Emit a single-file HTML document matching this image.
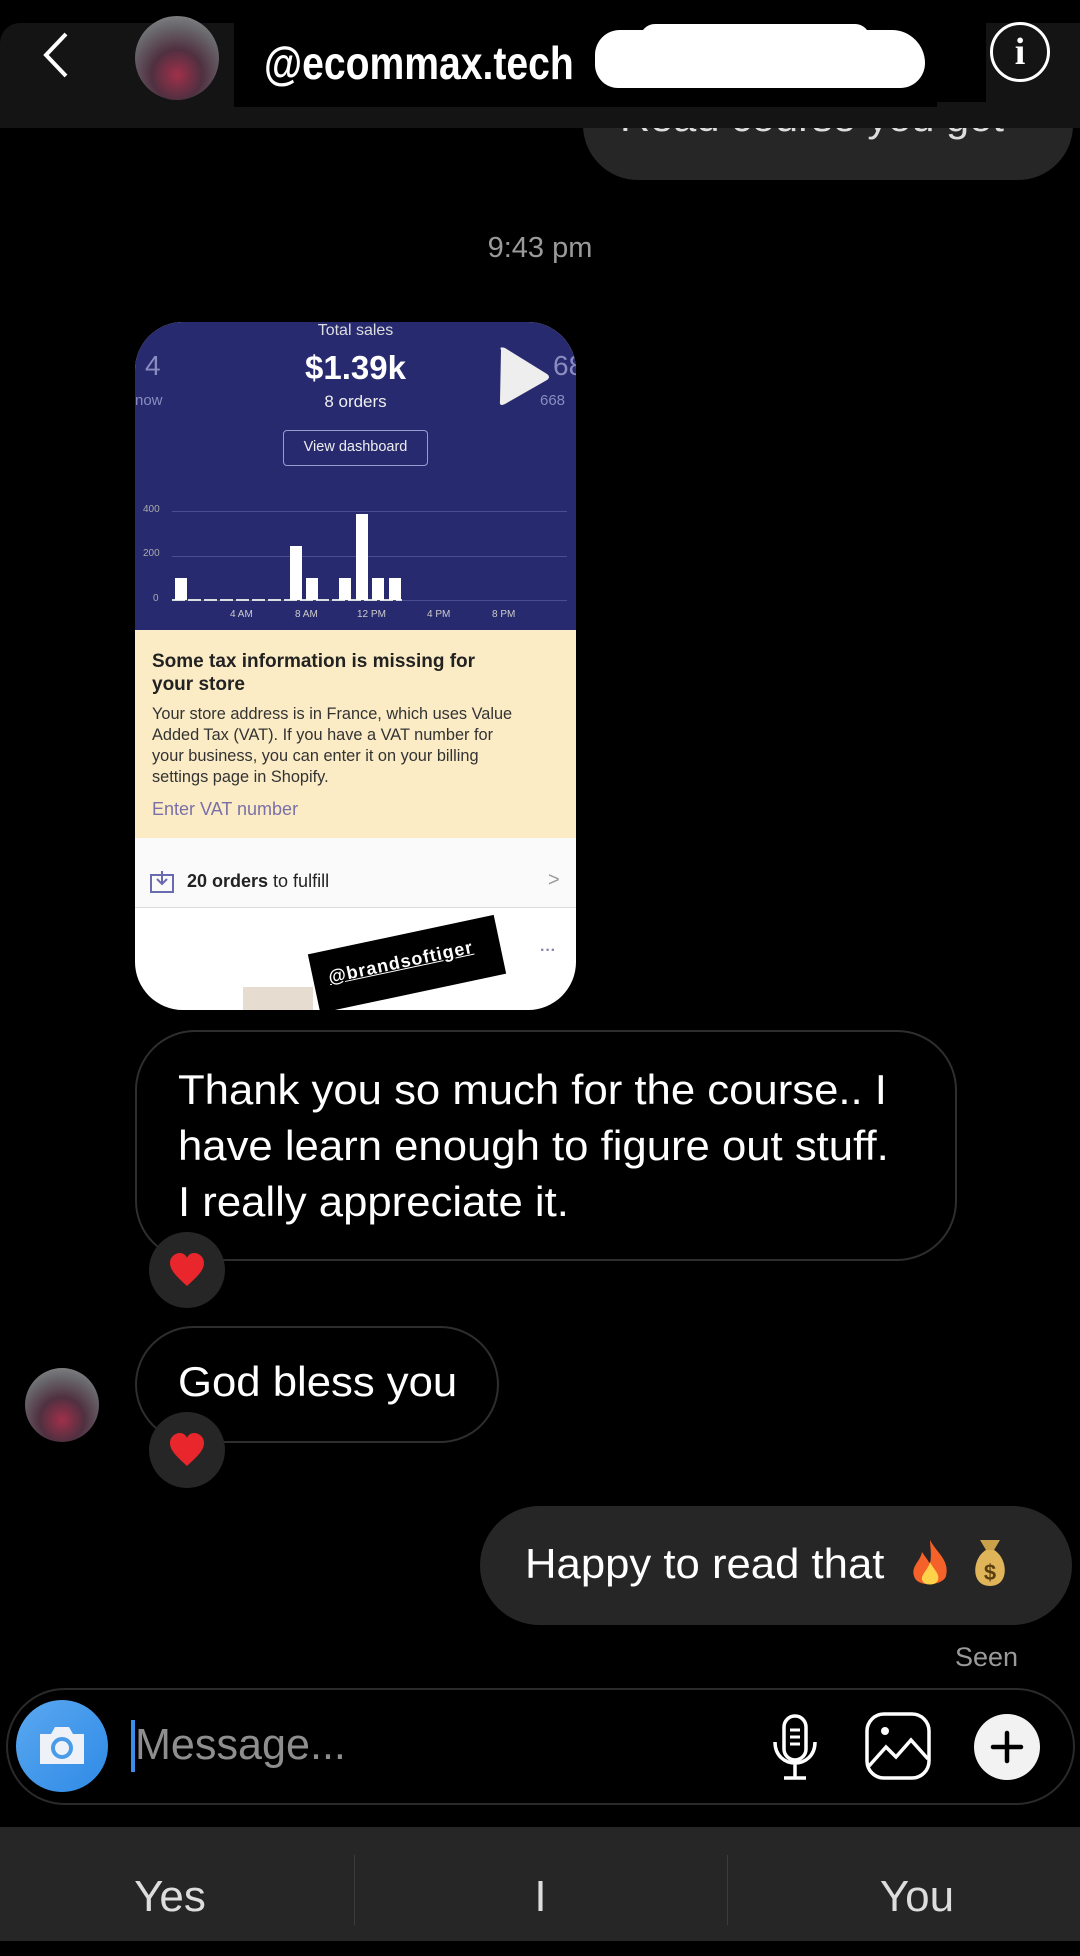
<!DOCTYPE html>
<html><head><meta charset="utf-8"><style>
*{margin:0;padding:0;box-sizing:border-box}
body{width:1080px;height:1956px;background:#000;position:relative;overflow:hidden;font-family:"Liberation Sans",sans-serif;color:#fff}
.a{position:absolute}
.nx{display:inline-block;transform-origin:left center;transform:scaleX(1.04);white-space:nowrap}
.bub{position:absolute;border:2px solid #2e2e2e;border-radius:60px;background:#000}
.heart{position:absolute;width:76px;height:76px;border-radius:50%;background:#262626;display:flex;align-items:center;justify-content:center}
.card{position:absolute;left:135px;top:322px;width:441px;height:688px;border-radius:48px;overflow:hidden;background:#fff}
.c{position:absolute;text-align:center;width:100%;left:0}
.bar{position:absolute;background:#fff;width:12px;bottom:0}
</style></head><body>
<div class="a" style="left:583px;top:60px;width:490px;height:120px;border-radius:55px;background:#262626"></div>
<div class="a" style="left:620px;top:96px;font-size:40px;color:#ddd"><span class="nx">Read course you got</span></div>
<div class="a" style="left:0;top:23px;width:1080px;height:105px;background:#141414;border-radius:20px 0 0 0"></div>
<svg class="a" style="left:38px;top:30px" width="36" height="50"><path d="M28 4 L8 25 L28 46" stroke="#fff" stroke-width="4" fill="none"/></svg>
<div class="a" style="left:135px;top:16px;width:84px;height:84px;border-radius:50%;background:radial-gradient(circle at 50% 70%,#a0304a 0,#503040 35%,#6b6b70 70%,#9a9a9a 100%)"></div>
<div class="a" style="left:234px;top:23px;width:703px;height:84px;background:#000"></div>
<div class="a" style="left:900px;top:23px;width:86px;height:79px;background:#000"></div>
<div class="a" style="left:264px;top:36px;font-size:46px;font-weight:bold;text-decoration:underline;text-decoration-thickness:3px"><span class="nx" style="transform:scaleX(.85)">@ecommax.tech</span></div>
<div class="a" style="left:595px;top:30px;width:330px;height:58px;background:#fff;border-radius:30px 40px 30px 28px"></div>
<div class="a" style="left:640px;top:24px;width:230px;height:30px;background:#fff;border-radius:15px"></div>
<div class="a" style="left:990px;top:22px;width:60px;height:60px;border:3px solid #fff;border-radius:50%;text-align:center;font:bold 38px 'Liberation Serif',serif;line-height:54px">i</div>
<div class="a" style="left:0;top:232px;width:1080px;text-align:center;font-size:29px;color:#9a9a9a">9:43 pm</div>
<div class="card">
 <div class="a" style="left:0;top:0;width:441px;height:308px;background:#272a6e"></div>
 <div class="c" style="top:0;font-size:16px;color:#ddd">Total sales</div>
 <div class="c" style="top:27px;font-size:33px;font-weight:bold">$1.39k</div>
 <div class="c" style="top:70px;font-size:17px;color:#eee">8 orders</div>
 <div class="a" style="left:10px;top:28px;font-size:28px;color:#8a8cc0">4</div>
 <div class="a" style="left:0;top:70px;font-size:15px;color:#8a8cc0">now</div>
 <div class="a" style="left:405px;top:70px;font-size:15px;color:#8a8cc0">668</div>
 <div class="a" style="left:418px;top:28px;font-size:28px;color:#8a8cc0">68</div>
 <svg class="a" style="left:362px;top:24px" width="55" height="62"><path d="M4 4 Q2 0 8 2 L50 28 Q54 31 50 34 L8 58 Q2 61 3 55 Z" fill="#eee"/></svg>
 <div class="a" style="left:148px;top:108px;width:145px;height:36px;border:1.5px solid #9a9cd0;border-radius:4px;font-size:14.5px;text-align:center;line-height:33px;color:#eee">View dashboard</div>
 <div class="a" style="left:8px;top:182px;font-size:10px;color:#aaa">400</div>
 <div class="a" style="left:8px;top:226px;font-size:10px;color:#aaa">200</div>
 <div class="a" style="left:18px;top:271px;font-size:10px;color:#aaa">0</div>
 <div class="a" style="left:37px;top:189px;width:395px;height:1px;background:#4a4e8e"></div>
 <div class="a" style="left:37px;top:234px;width:395px;height:1px;background:#4a4e8e"></div>
 <div class="a" style="left:37px;top:278px;width:395px;height:1px;background:#4a4e8e"></div>
 <div class="a" style="left:37px;top:277px;width:230px;height:2px;background:repeating-linear-gradient(90deg,#ddd 0 13px,transparent 13px 16px)"></div>
 <div class="a" style="left:37px;top:158px;width:230px;height:120px">
  <div class="bar" style="left:3px;height:22px"></div>
  <div class="bar" style="left:118px;height:54px"></div>
  <div class="bar" style="left:134px;height:22px"></div>
  <div class="bar" style="left:167px;height:22px"></div>
  <div class="bar" style="left:184px;height:86px"></div>
  <div class="bar" style="left:200px;height:22px"></div>
  <div class="bar" style="left:217px;height:22px"></div>
 </div>
 <div class="a" style="left:95px;top:287px;font-size:10px;color:#ccc">4 AM</div>
 <div class="a" style="left:160px;top:287px;font-size:10px;color:#ccc">8 AM</div>
 <div class="a" style="left:222px;top:287px;font-size:10px;color:#ccc">12 PM</div>
 <div class="a" style="left:292px;top:287px;font-size:10px;color:#ccc">4 PM</div>
 <div class="a" style="left:357px;top:287px;font-size:10px;color:#ccc">8 PM</div>
 <div class="a" style="left:0;top:308px;width:441px;height:208px;background:#fbecc6"></div>
 <div class="a" style="left:17px;top:328px;font-size:19px;font-weight:bold;color:#222;line-height:23px">Some tax information is missing for<br>your store</div>
 <div class="a" style="left:17px;top:381px;font-size:17px;color:#333;line-height:21px;white-space:nowrap"><span style="display:inline-block;transform:scaleX(.96);transform-origin:left">Your store address is in France, which uses Value<br>Added Tax (VAT). If you have a VAT number for<br>your business, you can enter it on your billing<br>settings page in Shopify.</span></div>
 <div class="a" style="left:17px;top:477px;font-size:18px;color:#7a70a8">Enter VAT number</div>
 <div class="a" style="left:0;top:516px;width:441px;height:70px;background:#fafafa;border-bottom:1px solid #ddd"></div>
 <svg class="a" style="left:14px;top:548px" width="26" height="24"><rect x="2" y="5" width="22" height="17" fill="none" stroke="#6a6ab0" stroke-width="2"/><path d="M13 1 V13 M8 9 L13 14 L18 9" stroke="#6a6ab0" stroke-width="2" fill="none"/></svg>
 <div class="a" style="left:52px;top:549px;font-size:18px;color:#222"><b>20 orders</b> to fulfill</div>
 <div class="a" style="left:413px;top:547px;font-size:20px;color:#999">&gt;</div>
 <div class="a" style="left:405px;top:620px;font-size:16px;color:#8888aa;font-weight:bold">···</div>
 <div class="a" style="left:108px;top:665px;width:70px;height:40px;background:#e6ddd0"></div>
 <div class="a" style="left:177px;top:612px;width:190px;height:60px;background:#000;transform:rotate(-12deg)"></div>
 <div class="a" style="left:192px;top:630px;font-size:18px;font-weight:bold;text-decoration:underline;transform:rotate(-12deg);letter-spacing:1px">@brandsoftiger</div>
</div>
<div class="bub" style="left:135px;top:1030px;width:822px;height:231px"></div>
<div class="a" style="left:178px;top:1062px;font-size:42px;line-height:56px"><span class="nx">Thank you so much for the course.. I</span><br><span class="nx">have learn enough to figure out stuff.</span><br><span class="nx">I really appreciate it.</span></div>
<div class="heart" style="left:149px;top:1232px"><svg width="38" height="36"><path d="M19 34 C8 24 2 18 2 11 C2 5 7 1 12 1 C15 1 18 3 19 6 C20 3 23 1 26 1 C31 1 36 5 36 11 C36 18 30 24 19 34Z" fill="#e8262c"/></svg></div>
<div class="a" style="left:25px;top:1368px;width:74px;height:74px;border-radius:50%;background:radial-gradient(circle at 50% 70%,#a0304a 0,#503040 35%,#6b6b70 70%,#9a9a9a 100%)"></div>
<div class="bub" style="left:135px;top:1326px;width:364px;height:117px"></div>
<div class="a" style="left:178px;top:1358px;font-size:42px"><span class="nx">God bless you</span></div>
<div class="heart" style="left:149px;top:1412px"><svg width="38" height="36"><path d="M19 34 C8 24 2 18 2 11 C2 5 7 1 12 1 C15 1 18 3 19 6 C20 3 23 1 26 1 C31 1 36 5 36 11 C36 18 30 24 19 34Z" fill="#e8262c"/></svg></div>
<div class="a" style="left:480px;top:1506px;width:592px;height:119px;border-radius:60px;background:#262626"></div>
<div class="a" style="left:525px;top:1540px;font-size:42px"><span class="nx">Happy to read that</span></div>
<svg class="a" style="left:906px;top:1538px" width="48" height="52"><path d="M24 2 C30 14 44 22 40 38 C37 48 11 50 8 38 C5 28 14 24 16 14 C20 20 22 22 24 26 C26 16 24 8 24 2Z" fill="#f4622a"/><path d="M24 24 C28 32 34 36 32 42 C30 48 18 48 16 42 C15 36 22 32 24 24Z" fill="#ffd24a"/></svg>
<svg class="a" style="left:968px;top:1536px" width="44" height="54"><path d="M12 4 L32 4 L26 14 L18 14 Z" fill="#c9a14a"/><path d="M18 14 C4 22 2 50 22 50 C42 50 40 22 26 14 Z" fill="#e0b55a"/><text x="22" y="44" font-size="22" font-family="Liberation Sans" text-anchor="middle" fill="#5a4010" font-weight="bold">$</text></svg>
<div class="a" style="left:955px;top:1642px;font-size:27px;color:#9a9a9a">Seen</div>
<div class="a" style="left:6px;top:1688px;width:1069px;height:117px;border:2px solid #2a2a2a;border-radius:60px;background:#000"></div>
<div class="a" style="left:16px;top:1700px;width:92px;height:92px;border-radius:50%;background:linear-gradient(135deg,#5aa8f0,#2f8ae6)"></div>
<svg class="a" style="left:36px;top:1722px" width="52" height="46"><path d="M4 12 H15 L19 5 H33 L37 12 H48 V42 H4 Z" fill="#eef2f8"/><circle cx="26" cy="26" r="9" fill="none" stroke="#4a9be8" stroke-width="4"/></svg>
<div class="a" style="left:131px;top:1720px;width:4px;height:52px;background:#3b8ee8"></div>
<div class="a" style="left:135px;top:1720px;font-size:44px;color:#8e8e8e"><span class="nx" style="transform:scaleX(.98)">Message...</span></div>
<svg class="a" style="left:770px;top:1712px" width="52" height="72" fill="none" stroke="#fff" stroke-width="3.5"><rect x="14" y="4" width="22" height="44" rx="11"/><path d="M5 30 C5 58 45 58 45 30 M25 52 V66 M14 66 H36"/><path d="M20 18 H30 M20 25 H30 M20 32 H30" stroke-width="3"/></svg>
<svg class="a" style="left:864px;top:1711px" width="68" height="70" fill="none" stroke="#fff" stroke-width="3.5"><rect x="3" y="3" width="62" height="64" rx="17"/><circle cx="21" cy="20" r="4" fill="#fff" stroke="none"/><path d="M5 55 L22 36 L32 46 L47 29 L64 48"/></svg>
<div class="a" style="left:974px;top:1714px;width:66px;height:66px;border-radius:50%;background:#f2f2f2"></div>
<svg class="a" style="left:990px;top:1730px" width="34" height="34"><path d="M17 3 V31 M3 17 H31" stroke="#000" stroke-width="4.5" stroke-linecap="round"/></svg>
<div class="a" style="left:0;top:1827px;width:1080px;height:114px;background:#262626"></div>
<div class="a" style="left:354px;top:1855px;width:1px;height:70px;background:#3c3c3c"></div>
<div class="a" style="left:727px;top:1855px;width:1px;height:70px;background:#3c3c3c"></div>
<div class="a" style="left:0;top:1872px;width:340px;text-align:center;font-size:44px;color:#ddd">Yes</div>
<div class="a" style="left:354px;top:1872px;width:373px;text-align:center;font-size:44px;color:#ddd">I</div>
<div class="a" style="left:727px;top:1872px;width:380px;text-align:center;font-size:44px;color:#ddd">You</div>
</body></html>
